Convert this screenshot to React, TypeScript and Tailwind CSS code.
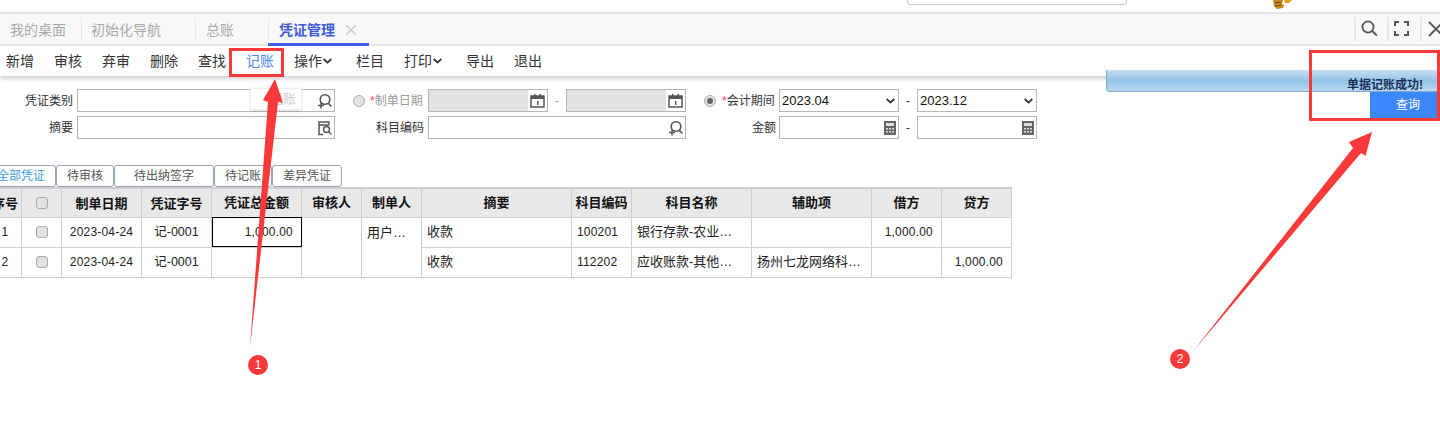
import React from 'react';

const FONT = "font-['Liberation_Sans','Noto_Sans_CJK_SC',sans-serif]";

const SearchPlus = () => (
  <svg width="16" height="16" viewBox="0 0 16 16" fill="none" stroke="#555" strokeWidth="1.6">
    <circle cx="8" cy="6.5" r="4.8" />
    <path d="M11.5 10.5l3 3M1 12.5h6M4 9.5v6" />
  </svg>
);

const DocSearch = () => (
  <svg width="16" height="16" viewBox="0 0 16 16" fill="none" stroke="#555" strokeWidth="1.5">
    <path d="M6 14.5H2V2h10v3M2 5h10" />
    <circle cx="9.5" cy="9.5" r="3" />
    <path d="M11.5 11.5l3 3" />
  </svg>
);

const CalendarIcon = () => (
  <svg width="15" height="15" viewBox="0 0 15 15">
    <path d="M1 3h13v11H1z" fill="#fff" stroke="#555" strokeWidth="1.5" />
    <path d="M1 3h13v3H1zM4 1h1.5v3H4zM9.5 1H11v3H9.5z" fill="#555" />
    <path d="M7 8h1.5v4H7z" fill="#555" />
  </svg>
);

const CalcIcon = () => (
  <svg width="14" height="14" viewBox="0 0 14 14">
    <path d="M1 0h12v14H1z" fill="#666" />
    <path d="M3 2h8v3H3z" fill="#ddd" />
    <path d="M3 7h2v1.5H3zM6 7h2v1.5H6zM9 7h2v1.5H9zM3 10h2v1.5H3zM6 10h2v1.5H6zM9 10h2v1.5H9z" fill="#ddd" />
  </svg>
);

const Chevron = () => (
  <svg width="9" height="6" viewBox="0 0 9 6" fill="none" stroke="#333" strokeWidth="1.8">
    <path d="M.7 1l3.8 3.6L8.3 1" />
  </svg>
);

const toolbar = ['新增', '审核', '弃审', '删除', '查找', '记账', '操作', '栏目', '打印', '导出', '退出'];

const Field = ({ width, gray, icon, iconWidth = 'w-[16px]' }: { width: string; gray?: boolean; icon?: React.ReactNode; iconWidth?: string }) => (
  <div className={`${width} ${gray ? 'bg-[#e2e2e2]' : 'bg-white'} h-[23px] border border-[#b5b5b5] flex items-center justify-end`}>
    {icon && <span className={`${iconWidth} h-full bg-white flex items-center justify-center`}>{icon}</span>}
  </div>
);

const Select = ({ value }: { value: string }) => (
  <div className="w-[120px] h-[23px] border border-[#b5b5b5] flex items-center justify-between pl-[2px] pr-[3px] text-[13px] text-[#111]">
    <span>{value}</span>
    <Chevron />
  </div>
);

const Radio = ({ on }: { on?: boolean }) => (
  <span className="w-[12px] h-[12px] rounded-full border border-[#aaa] bg-[#e4e4e4] flex items-center justify-center">
    {on && <span className="w-[6px] h-[6px] rounded-full bg-[#666]" />}
  </span>
);

const Check = () => (
  <span className="block mx-auto w-[12px] h-[12px] rounded-[3px] border border-[#aaa] bg-[#e2e2e2]" />
);

const headers = ['序号', '', '制单日期', '凭证字号', '凭证总金额', '审核人', '制单人', '摘要', '科目编码', '科目名称', '辅助项', '借方', '贷方'];
const widths = ['w-[33px]', 'w-[40px]', 'w-[80px]', 'w-[70px]', 'w-[90px]', 'w-[60px]', 'w-[60px]', 'w-[150px]', 'w-[60px]', 'w-[120px]', 'w-[120px]', 'w-[70px]', 'w-[70px]'];

const td = 'border border-[#cfcfcf] text-[#222] whitespace-nowrap overflow-hidden';
const cjk = 'text-[13px]';
const num = 'text-[12px] tracking-[0.2px]';
const tabBtn = 'border border-[#9aa3b5] rounded-[3px] text-center leading-[21px]';

export default function App() {
  return (
    <div className={`relative w-[1440px] h-[447px] overflow-hidden bg-white ${FONT}`}>
      {/* top bar */}
      <div className="h-[12px] bg-white relative">
        <div className="absolute left-[907px] top-[-6px] w-[220px] h-[11px] border border-[#ccc] rounded-[3px]" />
        <svg className="absolute left-[1272px] top-0" width="22" height="9" viewBox="0 0 22 9">
          <path d="M1 0h10l-1 4 2 1-1 3-6 1-3-3z" fill="#c98a1b" />
          <path d="M12 0h8l-3 3h-4z" fill="#e8a020" />
          <path d="M3 3l6-1M3 6l6-1" stroke="#6b4410" />
        </svg>
      </div>

      {/* tab bar */}
      <div className="h-[34px] border-t-2 border-b-2 border-[#e6e6e6] bg-[#f8f8f8] flex items-stretch text-[14px] text-[#a9a9a9]">
        <div className="w-[81px] pl-[10px] pt-[3px] flex items-center">我的桌面</div>
        <div className="w-[114px] pl-[10px] pt-[3px] flex items-center border-l-0 relative">
          <span className="absolute left-0 top-[4px] h-[23px] w-px bg-[#e6e6e6]" />
          初始化导航
        </div>
        <div className="w-[73px] pl-[11px] pt-[3px] flex items-center relative">
          <span className="absolute left-0 top-[4px] h-[23px] w-px bg-[#e6e6e6]" />
          总账
        </div>
        <div className="w-[101px] h-[32px] pl-[11px] pt-[3px] flex items-center border-b-[3px] border-[#3e5ff0] text-[#3e5bd8] font-bold text-[14px] relative">
          <span className="absolute left-0 top-[4px] h-[23px] w-px bg-[#e6e6e6]" />
          凭证管理
          <svg className="ml-[11px]" width="10" height="10" viewBox="0 0 10 10" stroke="#c4c4c4" strokeWidth="1.3">
            <path d="M0 0l10 10M10 0L0 10" />
          </svg>
        </div>
        <div className="ml-auto flex items-center mb-[1px]">
          <div className="w-[33px] h-[24px] border-l-2 border-[#e6e6e6] flex items-center pl-[5px]">
            <svg width="17" height="17" viewBox="0 0 17 17" fill="none" stroke="#555" strokeWidth="1.8">
              <circle cx="7" cy="7" r="5.6" />
              <path d="M11 11l5 4.5" />
            </svg>
          </div>
          <div className="w-[33px] h-[24px] border-l-2 border-[#e6e6e6] flex items-center pl-[5px]">
            <svg width="15" height="15" viewBox="0 0 15 15" fill="none" stroke="#555" strokeWidth="2">
              <path d="M1 5V1h4M10 1h4v4M14 10v4h-4M5 14H1v-4" />
            </svg>
          </div>
          <div className="w-[20px] h-[24px] border-l-2 border-[#e6e6e6] flex items-center pl-[6px] overflow-hidden">
            <svg className="shrink-0" width="16" height="16" viewBox="0 0 16 16" stroke="#555" strokeWidth="1.8">
              <path d="M1 1l14 14M15 1L1 15" />
            </svg>
          </div>
        </div>
      </div>

      {/* toolbar */}
      <div className="h-[30px] flex items-center pl-[6px] gap-[20px] text-[14px] text-[#333] shadow-[0_3px_4px_rgba(0,0,0,0.18)]">
        {toolbar.map((t) => (
          <span key={t} className={`flex items-center gap-[1px] ${t === '记账' ? 'text-[#4f86f7]' : ''} ${t === '操作' || t === '打印' ? 'mr-[4px]' : ''}`}>
            {t}
            {(t === '操作' || t === '打印') && <Chevron />}
          </span>
        ))}
      </div>

      {/* query form */}
      <div className="mt-[13px] flex flex-col gap-[4px] text-[12px] text-[#333]">
        <div className="flex items-center h-[23px]">
          <span className="w-[73px] text-right mr-[4px]">凭证类别</span>
          <Field width="w-[258px]" icon={<SearchPlus />} iconWidth="w-[18px]" />
          <span className="ml-[18px]"><Radio /></span>
          <span className="w-[58px] ml-[5px] text-[#999] whitespace-nowrap"><span className="text-[#f0416a]">*</span>制单日期</span>
          <Field width="w-[120px]" gray icon={<CalendarIcon />} iconWidth="w-[19px]" />
          <span className="w-[18px] text-center text-[#999]">-</span>
          <Field width="w-[120px]" gray icon={<CalendarIcon />} iconWidth="w-[19px]" />
          <span className="ml-[18px]"><Radio on /></span>
          <span className="ml-[6px] w-[57px] whitespace-nowrap"><span className="text-[#f0416a]">*</span>会计期间</span>
          <Select value="2023.04" />
          <span className="w-[18px] text-center">-</span>
          <Select value="2023.12" />
        </div>
        <div className="flex items-center h-[23px]">
          <span className="w-[73px] text-right mr-[4px]">摘要</span>
          <Field width="w-[258px]" icon={<DocSearch />} iconWidth="w-[18px]" />
          <span className="w-[89px] text-right mr-[4px]">科目编码</span>
          <Field width="w-[258px]" icon={<SearchPlus />} iconWidth="w-[18px]" />
          <span className="w-[90px] text-right mr-[3px]">金额</span>
          <Field width="w-[120px]" icon={<CalcIcon />} />
          <span className="w-[18px] text-center">-</span>
          <Field width="w-[120px]" icon={<CalcIcon />} />
        </div>
      </div>

      {/* status tabs */}
      <div className="mt-[26px] ml-[-14px] flex h-[22px] text-[12px] text-[#555]">
        <span className={`w-[70px] text-[#3a9be0] ${tabBtn}`}>全部凭证</span>
        <span className={`w-[58px] ${tabBtn}`}>待审核</span>
        <span className={`w-[100px] ${tabBtn}`}>待出纳签字</span>
        <span className={`w-[58px] ${tabBtn}`}>待记账</span>
        <span className={`w-[70px] ${tabBtn}`}>差异凭证</span>
      </div>

      {/* voucher table */}
      <table className="ml-[-12px] table-fixed border-collapse w-[1023px] border-t-2 border-[#cfcfcf]">
        <thead>
          <tr className="h-[29px] bg-[#e8e8e8]">
            {headers.map((h, i) => (
              <th key={i} className={`${widths[i]} border border-[#cfcfcf] whitespace-nowrap overflow-hidden text-[13px] font-bold text-[#111] text-center ${i === 0 || i === 2 || i === 3 ? 'pt-[2px]' : ''}`}>
                {i === 1 ? <Check /> : h}
              </th>
            ))}
          </tr>
        </thead>
        <tbody>
          <tr className="h-[30px]">
            <td className={`${td} ${num} text-center`}>1</td>
            <td className={td}><Check /></td>
            <td className={`${td} ${num} text-center`}>2023-04-24</td>
            <td className={`${td} text-[12.5px] text-center`}>记-0001</td>
            <td className={`${td} ${num} text-right pr-[8px] outline outline-1 -outline-offset-1 outline-black`}>1,000.00</td>
            <td className={td} rowSpan={2} />
            <td className={`${td} ${cjk} align-top pl-[5px] pt-[5px]`} rowSpan={2}>用户…</td>
            <td className={`${td} ${cjk} pl-[5px]`}>收款</td>
            <td className={`${td} ${num} pl-[5px]`}>100201</td>
            <td className={`${td} ${cjk} pl-[5px]`}>银行存款-农业…</td>
            <td className={td} />
            <td className={`${td} ${num} text-right pr-[8px]`}>1,000.00</td>
            <td className={td} />
          </tr>
          <tr className="h-[30px]">
            <td className={`${td} ${num} text-center`}>2</td>
            <td className={td}><Check /></td>
            <td className={`${td} ${num} text-center`}>2023-04-24</td>
            <td className={`${td} text-[12.5px] text-center`}>记-0001</td>
            <td className={td} />
            <td className={`${td} ${cjk} pl-[5px]`}>收款</td>
            <td className={`${td} ${num} pl-[5px]`}>112202</td>
            <td className={`${td} ${cjk} pl-[5px]`}>应收账款-其他…</td>
            <td className={`${td} ${cjk} pl-[5px]`}>扬州七龙网络科…</td>
            <td className={td} />
            <td className={`${td} ${num} text-right pr-[8px]`}>1,000.00</td>
          </tr>
        </tbody>
      </table>

      {/* fading tooltip left over from the toolbar */}
      <div className="absolute left-[250px] top-[88px] w-[52px] h-[22px] bg-white border border-[#eee] shadow-sm text-[13px] text-[#ccc] text-right pr-[5px] leading-[20px]">记账</div>

      {/* success message, sliding in */}
      <div className="absolute left-[1106px] top-[70px] w-[340px] h-[22px] rounded-bl-[4px] border-l border-b border-[#7aa7d4] bg-gradient-to-b from-[#c5def2] via-[#93c4e8] to-[#bcd9f1]">
        <span className="absolute left-[240px] top-[6px] text-[12px] font-bold text-[#16305c] whitespace-nowrap">单据记账成功!</span>
      </div>
      <div className="absolute left-[1370px] top-[92px] w-[76px] h-[26px] bg-[#3b87fb] text-white text-[12px] text-center leading-[26px]">查询</div>

      {/* annotations */}
      <div className="absolute left-[229px] top-[48px] w-[55px] h-[29px] border-[3px] border-[#fa3a3a]" />
      <div className="absolute left-[1309px] top-[50px] w-[131px] h-[71px] border-[3px] border-[#fa3a3a]" />
      <svg className="absolute left-0 top-0 pointer-events-none" width="1440" height="447" viewBox="0 0 1440 447">
        <path d="M275 79L283 103 278 102 250 347 268 102 263 100Z" fill="#fa3a3a" />
        <path d="M1372 132L1365.5 156 1361 153 1192.5 352 1353 148 1349 142Z" fill="#fa3a3a" />
      </svg>
      <div className="absolute left-[248px] top-[355px] w-[20px] h-[20px] rounded-full bg-[#fa3a3a] text-white text-[12px] text-center leading-[20px]">1</div>
      <div className="absolute left-[1170px] top-[349px] w-[20px] h-[20px] rounded-full bg-[#fa3a3a] text-white text-[12px] text-center leading-[20px]">2</div>
    </div>
  );
}
